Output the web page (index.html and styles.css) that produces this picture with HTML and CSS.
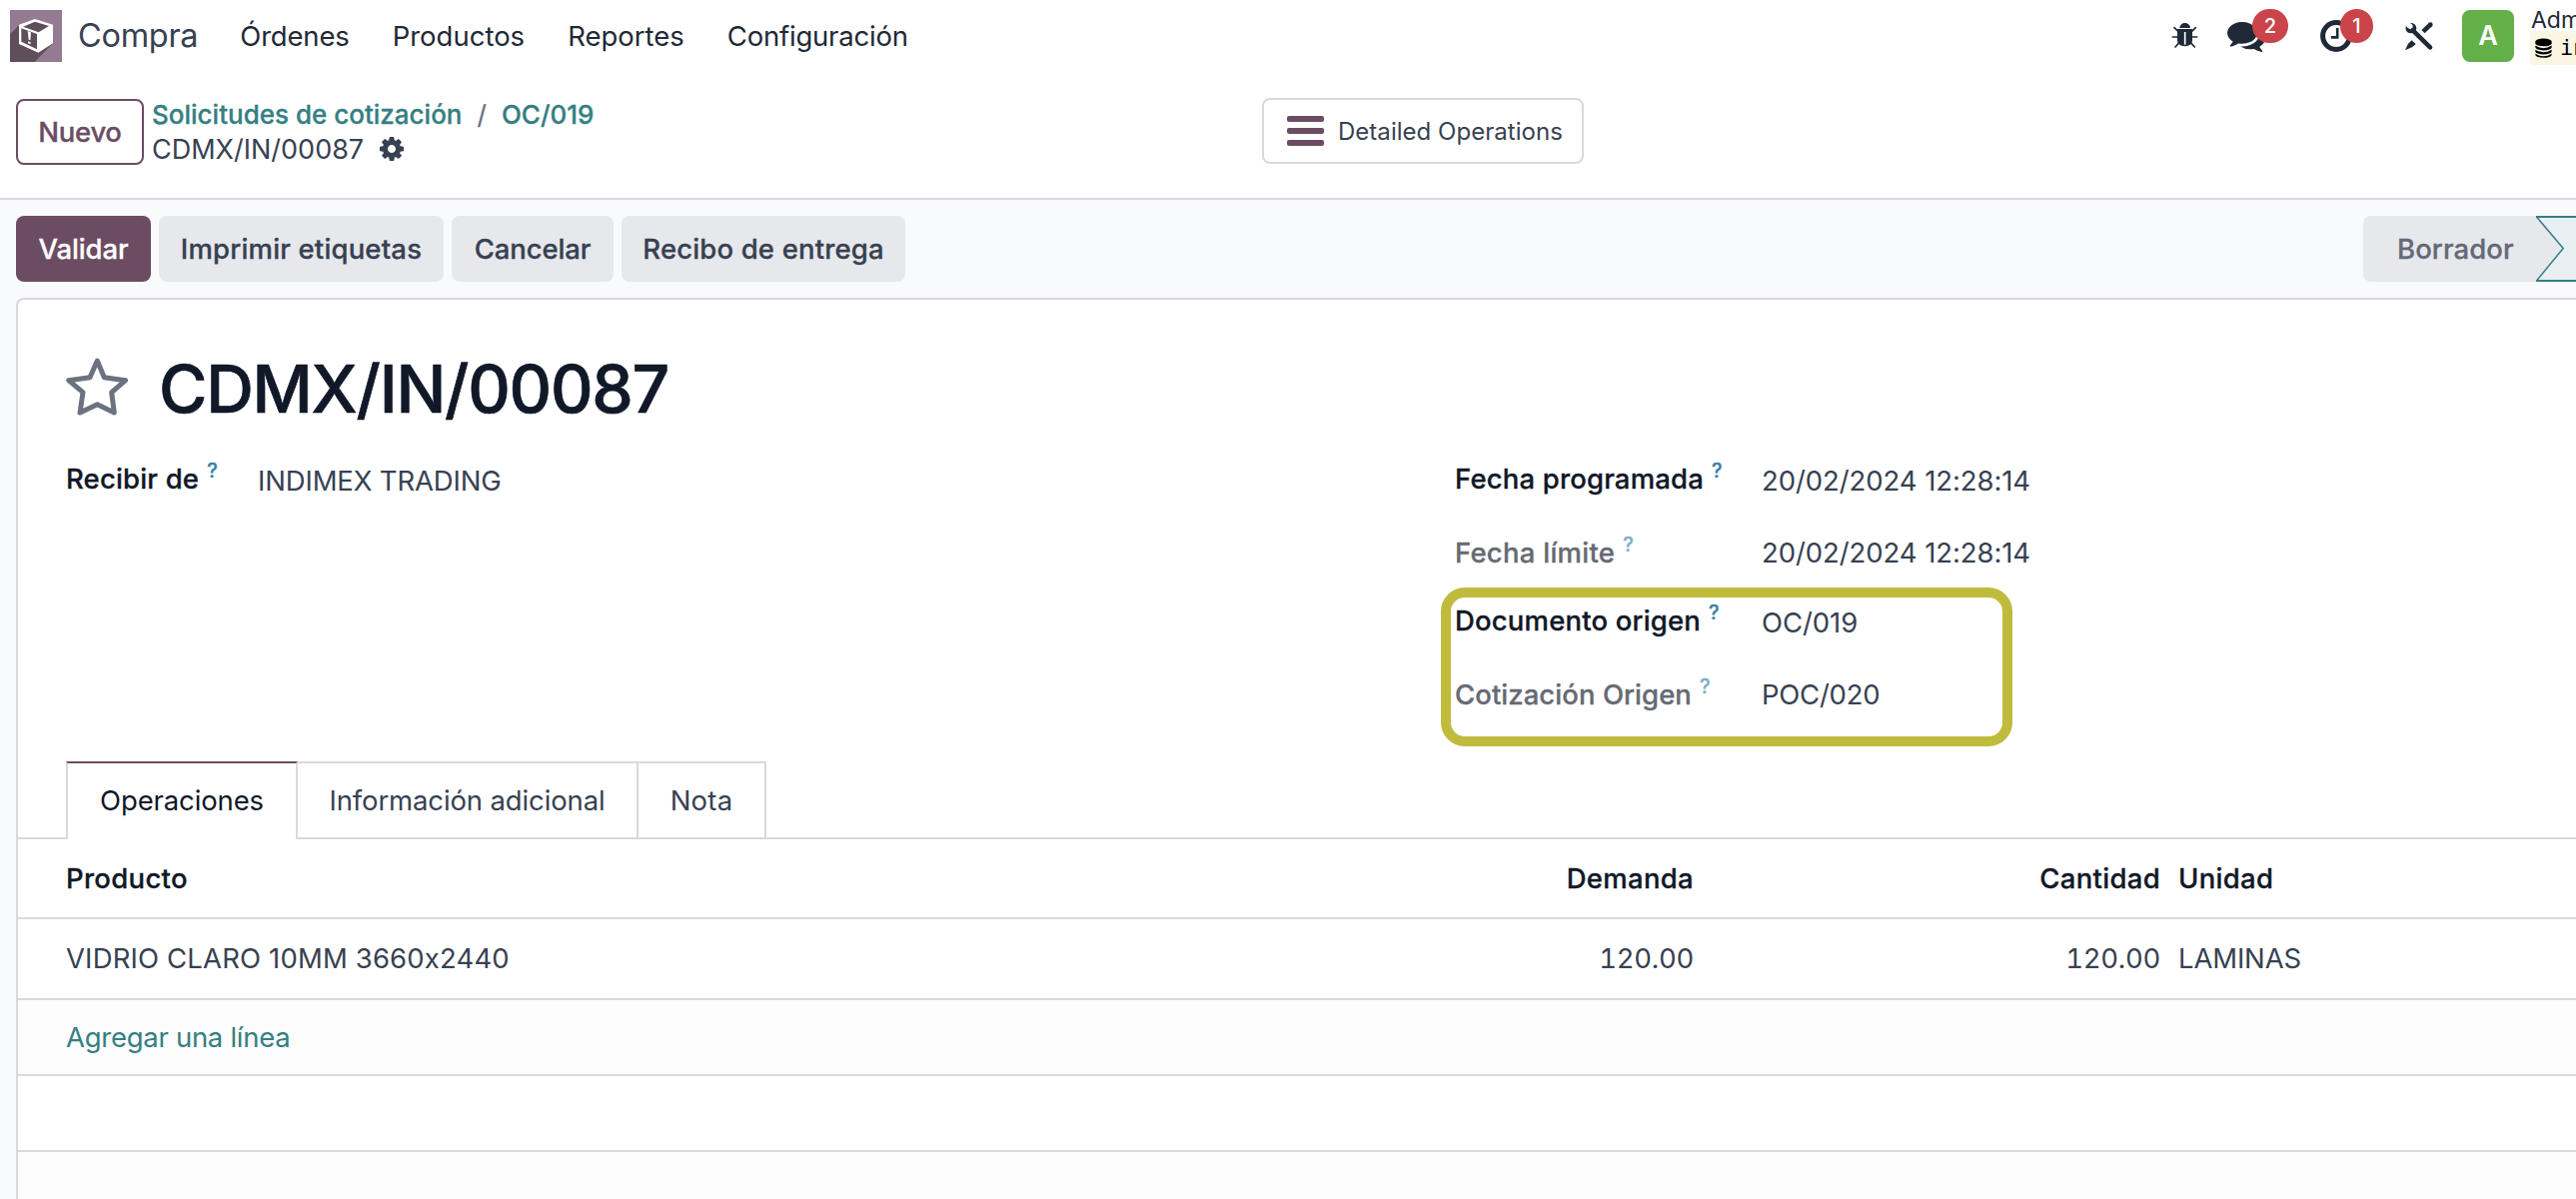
FILE: index.html
```html
<!DOCTYPE html>
<html lang="es">
<head>
<meta charset="utf-8">
<title>CDMX/IN/00087</title>
<link rel="stylesheet" href="styles.css">
</head>
<body>
<header class="navbar">
  <svg class="app-icon" viewBox="30 30 156 156">
    <rect x="30" y="30" width="156" height="156" fill="#957b91"/>
    <path d="M58 75 30 103V186H104L159 130Z" fill="#5f4f5b"/>
    <path d="M105 57 159 74V130L115 158 57 132V74Z" fill="#fff"/>
    <path d="M105 65 147 78 116 97 69 80Z" fill="#5f4f5b"/>
    <path d="M64 85 111 102V148L64 125Z" fill="#5f4f5b"/>
    <path d="M83 93 93 97 91 121 86 119ZM84 124 92 127V133L84 130Z" fill="#fff"/>
  </svg>
  <span class="brand">Compra</span>
  <nav class="menu">
    <a class="m-orders">Órdenes</a>
    <a>Productos</a>
    <a>Reportes</a>
    <a class="m-config">Configuración</a>
  </nav>
  <div class="systray">
    <svg class="ico-bug" viewBox="39 51 81 81">
      <path d="M64 69a16 15 0 0 1 32 0ZM57 72H102V106Q102 123 80 124 57 123 57 106Z" fill="#1f2937"/>
      <path d="M43 96H116M48 68 60 80M112 68 100 80M51 126 63 113M109 126 97 113" stroke="#1f2937" stroke-width="5" stroke-linecap="round"/>
      <path d="M80 81V119" stroke="#fff" stroke-width="5"/>
    </svg>
    <div class="tray-chat">
      <svg class="ico-chat" viewBox="0 256 1792 1408"><path fill="#1f2937" d="M1408 768q0 139-94 257t-256.500 186.500-353.500 68.500q-86 0-176-16-124 88-278 128-36 9-86 16h-3q-11 0-20.500-8t-11.500-21q-1-3-1-6.500t.5-6.500 2-6l2.500-5 3.500-5.500 4-5 4.500-5 4-4.500q5-6 23-25t26-29.500 22.500-29 25-38.500 20.500-44q-124-72-195-177t-71-224q0-139 94-257t256.500-186.500 353.500-68.500 353.500 68.500 256.500 186.500 94 257zm384 256q0 120-71 224.500t-195 176.500q10 24 20.500 44t25 38.500 22.500 29 26 29.500 23 25q1 1 4 4.500t4.500 5 4 5 3.500 5.500l2.500 5 2 6 .5 6.500-1 6.500q-3 14-13 22t-22 7q-50-7-86-16-154-40-278-128-90 16-176 16-271 0-472-132 58 4 88 4 161 0 309-45t264-129q125-92 192-212t67-257q0-77-23-152 129 71 204 178t75 230z"/></svg>
      <span class="badge badge-chat">2</span>
    </div>
    <div class="tray-clock">
      <svg class="ico-clock" viewBox="0 0 32 32"><circle cx="16" cy="16" r="13.400" fill="none" stroke="#1f2937" stroke-width="5"/><path d="M17.200 8V17.400H10.800" fill="none" stroke="#1f2937" stroke-width="2.600"/></svg>
      <span class="badge badge-clock">1</span>
    </div>
    <svg class="ico-tools" viewBox="48 62 90 90">
      <path d="M74 90 126 141" stroke="#1f2937" stroke-width="14" stroke-linecap="round"/>
      <path d="M105 94 127 73" stroke="#1f2937" stroke-width="14"/>
      <circle cx="127" cy="73" r="7" fill="#1f2937"/>
      <path d="M53 77Q50 96 66 99 84 99 85 84 84 68 66 67L74 75V83L68 87 60 84Z" fill="#1f2937"/>
      <path d="M71 120 83 131 73 140 51 150 60 130Z" fill="#1f2937"/>
    </svg>
    <span class="avatar">A</span>
    <div class="user">
      <span class="user-name">Adm</span>
      <span class="user-db">
        <svg class="ico-db" viewBox="440 116 50 58">
          <path d="M441 126a24 9 0 0 1 48 0v5a24 9 0 0 1-48 0Z"/>
          <path d="M441 138q24 15 48 0v5a24 9 0 0 1-48 0ZM441 150q24 15 48 0v5a24 9 0 0 1-48 0ZM441 162q24 15 48 0v3a24 9 0 0 1-48 0Z"/>
        </svg>
        <span>in</span>
      </span>
    </div>
  </div>
</header>

<section class="control-panel">
  <div class="cp-left">
    <button class="btn btn-new">Nuevo</button>
    <div class="crumbs">
      <div class="crumb-line"><a>Solicitudes de cotización</a><i>/</i><a>OC/019</a></div>
      <div class="crumb-line crumb-now">CDMX/IN/00087
        <svg class="ico-cog" viewBox="128 128 1536 1536"><path fill="#374151" d="M1152 896q0-106-75-181t-181-75-181 75-75 181 75 181 181 75 181-75 75-181zm512-109v222q0 12-8 23t-20 13l-185 28q-19 54-39 91 35 50 107 138 10 12 10 25t-9 23q-27 37-99 108t-94 71q-12 0-26-9l-138-108q-44 23-91 38-16 136-29 186-7 28-36 28h-222q-14 0-24.500-8.500t-11.500-21.500l-28-184q-49-16-90-37l-141 107q-10 9-25 9-14 0-25-11-126-114-165-168-7-10-7-23 0-12 8-23 15-21 51-66.500t54-70.500q-27-50-41-99l-183-27q-13-2-21-12.500t-8-23.500v-222q0-12 8-23t19-13l186-28q14-46 39-92-40-57-107-138-10-12-10-24 0-10 9-23 26-36 98.500-107.500t94.500-71.500q13 0 26 10l138 107q44-23 91-38 16-136 29-186 7-28 36-28h222q14 0 24.500 8.500t11.500 21.500l28 184q49 16 90 37l142-107q9-9 24-9 13 0 25 10 129 119 165 170 7 8 7 22 0 12-8 23-15 21-51 66.500t-54 70.500q26 50 41 98l183 28q13 2 21 12.500t8 23.500z"/></svg>
      </div>
    </div>
  </div>
  <button class="btn btn-stat">
    <svg class="ico-bars" viewBox="0 0 37 30" fill="#6c4c63"><rect width="37" height="6" rx="2"/><rect y="12" width="37" height="6" rx="2"/><rect y="24" width="37" height="6" rx="2"/></svg>
    <span class="stat-text">Detailed Operations</span>
  </button>
</section>

<main class="form">
  <div class="statusbar">
    <button class="btn btn-primary">Validar</button>
    <button class="btn btn-labels">Imprimir etiquetas</button>
    <button class="btn btn-cancel">Cancelar</button>
    <button class="btn btn-receipt">Recibo de entrega</button>
    <div class="stages">
      <span class="stage">Borrador</span>
      <svg class="stage-next" viewBox="0 0 40 66">
        <rect width="40" height="66" fill="#e7e8ec"/>
        <path d="M0 0H42V66H0L27.500 32.500Z" fill="#e8eff2"/>
        <path d="M.5 1 27.200 32.500.500 65" fill="none" stroke="#357f82" stroke-width="1.500"/>
        <path d="M0 1H42M0 65H42" stroke="#357f82" stroke-width="2"/>
      </svg>
    </div>
  </div>

  <div class="sheet">
    <div class="title-row">
      <svg class="ico-star" viewBox="192 495 198 189"><path d="M292 513 270 563 206 572 249 608 240 669 292 644 343 669 335 608 377 572 313 563Z" fill="none" stroke="#6b7280" stroke-width="15" stroke-linejoin="round"/></svg>
      <h1>CDMX/IN/00087</h1>
    </div>
    <div class="fields">
      <dl class="group group-left">
        <dt class="up">Recibir de<sup>?</sup></dt><dd class="v-partner">INDIMEX TRADING</dd>
      </dl>
      <dl class="group group-right">
        <dt class="up">Fecha programada<sup>?</sup></dt><dd>20/02/2024 12:28:14</dd>
        <dt class="muted">Fecha límite<sup>?</sup></dt><dd>20/02/2024 12:28:14</dd>
        <dt class="up">Documento origen<sup>?</sup></dt><dd>OC/019</dd>
        <dt class="muted quote">Cotización Origen<sup>?</sup></dt><dd class="v-quote">POC/020</dd>
      </dl>
      <div class="highlight"></div>
    </div>
    <nav class="tabs">
      <a class="tab tab-ops active">Operaciones</a>
      <a class="tab tab-info">Información adicional</a>
      <a class="tab tab-note">Nota</a>
    </nav>
    <div class="list">
      <div class="row head"><span>Producto</span><span class="num">Demanda</span><span class="num">Cantidad</span><span class="unit">Unidad</span></div>
      <div class="row data"><span class="product">VIDRIO CLARO 10MM 3660x2440</span><span class="num">120.00</span><span class="num">120.00</span><span class="unit">LAMINAS</span></div>
      <div class="row blank striped"><a class="add">Agregar una línea</a></div>
      <div class="row blank"></div>
      <div class="row blank striped"></div>
    </div>
  </div>
</main>
</body>
</html>
```
FILE: styles.css
```css
* { box-sizing: border-box; }
html { height: 1200px; overflow: hidden; }
body {
  margin: 0;
  height: 1200px;
  overflow: hidden;
  background: #fff;
  color: #374151;
  font: 400 27.5px/36px Inter, "Liberation Sans", sans-serif;
  font-feature-settings: "calt" 0;
  white-space: nowrap;
}
svg { display: block; flex: none; }

/* Top bar */
.navbar { display: flex; align-items: center; height: 72px; padding-left: 10px; color: #1f2937; }
.app-icon { width: 52px; height: 52px; }
.brand { margin-left: 16px; color: #374151; font-size: 32.5px; letter-spacing: -.3px; }
.menu { display: flex; gap: 43px; margin-left: 42px; }
.m-orders { letter-spacing: -.18px; }
.m-config { letter-spacing: -.22px; }
.systray { display: flex; align-items: center; width: 405px; height: 72px; margin-left: auto; }
.ico-bug { width: 27px; height: 27px; margin-top: -2px; }
.tray-chat { position: relative; margin-left: 29px; }
.ico-chat { width: 38px; height: 30px; margin-top: 2px; }
.tray-clock { position: relative; margin-left: 55px; }
.ico-clock { width: 32px; height: 32px; }
.badge {
  position: absolute;
  height: 34px;
  border-radius: 17px;
  background: #ca444a;
  color: #fff;
  font-size: 20px;
  font-weight: 500;
  line-height: 34px;
  text-align: center;
}
.badge-chat { left: 25px; top: -11px; width: 36px; }
.badge-clock { left: 20px; top: -11px; width: 33px; }
.ico-tools { width: 30px; height: 30px; margin-left: 52px; }
.avatar {
  flex: none;
  width: 52px;
  height: 52px;
  margin-left: 28px;
  border-radius: 8px;
  background: #63af48;
  color: #fff;
  font-size: 27px;
  font-weight: 600;
  line-height: 52px;
  text-align: center;
}
.user { display: flex; flex-direction: column; flex: none; width: 46px; height: 65px; margin: -7px 0 0 16px; padding-top: 7px; overflow: hidden; }
.user-name { height: 24px; padding-left: 1px; font-size: 23px; line-height: 26px; }
.user-db { display: flex; align-items: center; height: 34px; padding-left: 5px; background: #faf6e3; color: #000; font: 22px/34px "DejaVu Sans Mono", monospace; }
.ico-db { width: 17px; height: 20px; margin-right: 8px; }

/* Buttons */
.btn {
  display: flex;
  align-items: center;
  justify-content: center;
  flex: none;
  height: 66px;
  padding: 0;
  border: 0;
  border-radius: 8px;
  background: #e7e8ec;
  color: #374151;
  font: 500 27.5px/36px Inter, "Liberation Sans", sans-serif;
  white-space: nowrap;
  -webkit-text-stroke: .3px;
}
.btn-new { width: 128px; margin-top: 2px; border: 2px solid #6c4c63; background: #fff; color: #6c4c63; letter-spacing: -.3px; }
.btn-stat { justify-content: flex-start; width: 322px; padding-left: 23px; border: 2px solid #d8d9de; background: #fff; font-size: 24px; font-weight: 400; letter-spacing: .03px; -webkit-text-stroke: 0; }
.stat-text { padding-top: 1px; }
.ico-bars { width: 37px; height: 30px; margin-right: 14px; }
.btn-primary { width: 135px; background: #6c4c63; color: #fff; letter-spacing: -.1px; }
.btn-labels { width: 285px; letter-spacing: .17px; }
.btn-cancel { width: 162px; letter-spacing: -.13px; }
.btn-receipt { width: 284px; letter-spacing: .15px; }

/* Breadcrumb band */
.control-panel { display: grid; grid-template-columns: 1247px auto; justify-content: start; align-items: center; height: 128px; padding: 0 0 8px 16px; border-bottom: 2px solid #d8d9de; }
.cp-left { display: flex; align-items: center; gap: 8px; }
.crumbs { padding-top: 2px; }
.crumb-line { display: flex; align-items: center; height: 35px; font-size: 26px; font-weight: 500; color: #357f82; -webkit-text-stroke: .3px; }
.crumb-line i { margin: 0 15px; color: #6b7280; font-style: normal; font-weight: 400; }
.crumb-now { color: #374151; font-size: 27px; font-weight: 400; -webkit-text-stroke: 0; }
.ico-cog { width: 24px; height: 24px; margin: -2px 0 0 16px; }

/* Form area */
.form { height: 1000px; background: #f9fafc; }
.statusbar { display: flex; align-items: center; gap: 8px; height: 98px; padding-left: 16px; }
.stages { display: flex; width: 213px; margin-left: auto; }
.stage { flex: none; width: 173px; height: 66px; padding-left: 34px; border-radius: 8px 0 0 8px; background: #e7e8ec; color: #636a77; font-weight: 500; line-height: 66px; letter-spacing: .08px; -webkit-text-stroke: .3px; }
.stage-next { width: 40px; height: 66px; }
.sheet { height: 902px; margin-left: 16px; overflow: hidden; border: solid #d8d9de; border-width: 2px 0 0 2px; border-radius: 8px 0 0 0; background: #fff; }
.title-row { display: flex; align-items: center; gap: 29px; margin-top: 49px; height: 80px; padding-left: 46px; }
.ico-star { width: 66px; height: 63px; margin-top: -5px; }
h1 { margin: 0; color: #111827; font-size: 66px; font-weight: 500; line-height: 80px; letter-spacing: -1.25px; -webkit-text-stroke: .7px; }

.fields { position: relative; display: grid; grid-template-columns: 1390px auto; align-items: start; margin: 16px 0 29px; padding-left: 48px; }
.group { display: grid; margin: 0; align-items: center; }
.group-left { grid-template: 72px / 192px auto; justify-content: start; }
.group-right { grid-template: 72px 72px 68px 76px / 307px auto; justify-content: start; }
dt { color: #111827; font-weight: 500; letter-spacing: .17px; -webkit-text-stroke: .3px; }
dt.up { padding-bottom: 4px; }
dt.muted { color: #666a73; letter-spacing: .25px; }
dt.quote { letter-spacing: .05px; }
dd { margin: 0; letter-spacing: -.08px; }
.v-partner { letter-spacing: -.17px; }
.v-quote { letter-spacing: -.25px; }
sup { margin-left: 8px; color: #3580a6; font-size: 20px; line-height: 0; vertical-align: 11px; }
.muted sup { color: #7bafc6; }
.highlight { position: absolute; left: 1424px; top: 143px; width: 572px; height: 159px; border: 10px solid #c0bb3c; border-radius: 24px; }

/* Notebook */
.tabs { display: flex; height: 78px; padding-left: 48px; border-bottom: 2px solid #d8d9de; }
.tab { height: 76px; border: solid #d8d9de; border-width: 2px 2px 0 0; line-height: 74px; text-align: center; letter-spacing: -.13px; }
.tab.active { height: 78px; border-left-width: 2px; border-top-color: #6c4c63; background: #fff; color: #111827; }
.tab-ops { width: 232px; }
.tab-info { width: 341px; }
.tab-note { width: 128px; letter-spacing: .2px; }

/* Lines */
.row { display: grid; grid-template-columns: 1000px 629px 467px auto; align-items: center; padding-left: 48px; border-bottom: 2px solid #d8d9de; }
.head { height: 80px; color: #111827; font-weight: 500; letter-spacing: .3px; -webkit-text-stroke: .3px; }
.data { height: 81px; padding-bottom: 1px; }
.blank { height: 76px; }
.striped { background: #fcfcfc; }
.num { text-align: right; }
.product { letter-spacing: .15px; }
.data .num { font-variant-numeric: tabular-nums; letter-spacing: -.3px; }
.unit { padding-left: 18px; }
.data .unit { letter-spacing: -.16px; }
.add { color: #357f82; letter-spacing: -.28px; }
```
